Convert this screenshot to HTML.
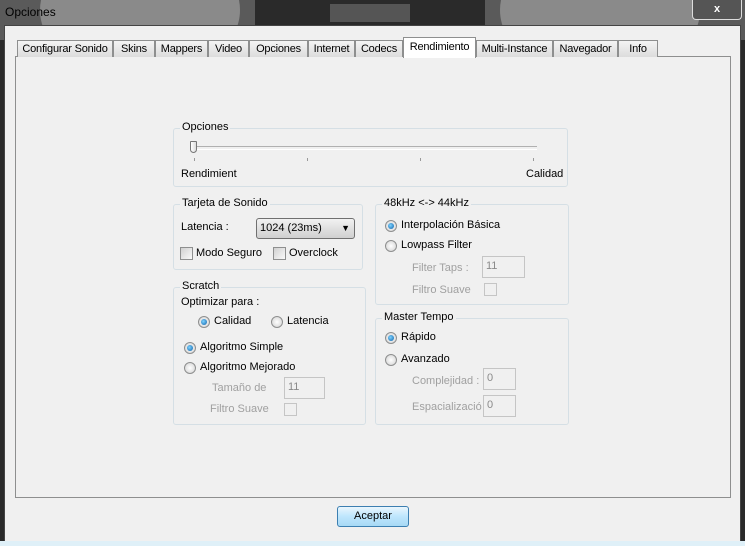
<html><head><style>
body{margin:0;width:745px;height:546px;overflow:hidden;background:#2a2a2a;font-family:"Liberation Sans",sans-serif;font-size:11px;color:#000;position:relative}
.a{position:absolute}
.tab{position:absolute;top:40px;height:17px;background:linear-gradient(#f4f4f4,#dcdcdc);border:1px solid #8e8f8f;border-bottom:none;box-sizing:border-box;text-align:center;line-height:16px;font-size:11px;letter-spacing:-0.2px}
.g{position:absolute;border:1px solid #d5dfe5;border-radius:3px;box-sizing:border-box}
.gl{position:absolute;top:-8px;left:6px;background:#f0f0f0;padding:0 2px}
.rb{position:absolute;width:12px;height:12px;border-radius:50%;border:1px solid #8e8f8f;background:radial-gradient(#fff,#d0d0d0);box-sizing:border-box}
.rb.on::after{content:"";position:absolute;left:2px;top:2px;width:6px;height:6px;border-radius:50%;background:radial-gradient(circle at 40% 40%,#7fd3ff,#0a5fa8)}
.cb{position:absolute;width:13px;height:13px;border:1px solid #8e8f8f;background:linear-gradient(135deg,#d0d0d0,#fafafa);box-sizing:border-box}
.cbd{border-color:#c5c5c5;background:#f0f0f0}
.dis{color:#a0a0a0}
.tb{position:absolute;border:1px solid #c5c5c5;background:#f0f0f0;box-sizing:border-box;color:#8a8a8a;padding-left:3px;line-height:18px}
</style></head><body>
<div class="a" style="left:0;top:0;width:745px;height:40px;background:#5a5a5a"></div>
<div class="a" style="left:40px;top:-60px;width:200px;height:140px;border-radius:50%;background:#8a8a8a"></div>
<div class="a" style="left:500px;top:-60px;width:200px;height:140px;border-radius:50%;background:#8a8a8a"></div>
<div class="a" style="left:255px;top:0;width:230px;height:26px;background:#2a2a2a"></div>
<div class="a" style="left:330px;top:4px;width:80px;height:18px;background:#555"></div>
<div class="a" style="left:5px;top:5px;color:#000;font-size:12px">Opciones</div>
<div class="a" style="left:692px;top:0;width:50px;height:20px;border:1px solid #ddd;border-top:none;border-radius:0 0 4px 4px;box-sizing:border-box;color:#fff;text-align:center;font-weight:bold;line-height:18px;background:#555">x</div>
<div class="a" style="left:4px;top:25px;width:737px;height:517px;background:#f0f0f0;border:1px solid #444;box-sizing:border-box"></div>
<div class="a" style="left:0;top:541px;width:745px;height:5px;background:#dff0f8"></div>
<div class="a" style="left:15px;top:56px;width:716px;height:442px;border:1px solid #8e8f8f;box-sizing:border-box;background:#f0f0f0"></div>
<div class="tab" style="left:17px;width:96px">Configurar Sonido</div>
<div class="tab" style="left:113px;width:42px">Skins</div>
<div class="tab" style="left:155px;width:53px">Mappers</div>
<div class="tab" style="left:208px;width:41px">Video</div>
<div class="tab" style="left:249px;width:59px">Opciones</div>
<div class="tab" style="left:308px;width:47px">Internet</div>
<div class="tab" style="left:355px;width:48px">Codecs</div>
<div class="tab" style="left:403px;top:37px;width:73px;height:21px;background:#fff;line-height:18px">Rendimiento</div>
<div class="tab" style="left:476px;width:77px">Multi-Instance</div>
<div class="tab" style="left:553px;width:65px">Navegador</div>
<div class="tab" style="left:618px;width:40px">Info</div>

<div class="g" style="left:173px;top:128px;width:395px;height:59px"><span class="gl">Opciones</span></div>
<div class="a" style="left:192px;top:146px;width:345px;height:2px;border-top:1px solid #b0b0b0;border-bottom:1px solid #fff"></div>
<div class="a" style="left:190px;top:141px;width:7px;height:12px;border:1px solid #777;border-radius:1px 1px 4px 4px;background:linear-gradient(90deg,#fff,#ddd);box-sizing:border-box"></div>
<div class="a" style="left:194px;top:158px;width:1px;height:3px;background:#999"></div>
<div class="a" style="left:307px;top:158px;width:1px;height:3px;background:#999"></div>
<div class="a" style="left:420px;top:158px;width:1px;height:3px;background:#999"></div>
<div class="a" style="left:533px;top:158px;width:1px;height:3px;background:#999"></div>
<div class="a" style="left:181px;top:168px">Rendimient</div>
<div class="a" style="left:526px;top:168px">Calidad</div>

<div class="g" style="left:173px;top:204px;width:190px;height:66px"><span class="gl">Tarjeta de Sonido</span></div>
<div class="a" style="left:181px;top:221px">Latencia :</div>
<div class="a" style="left:256px;top:218px;width:99px;height:21px;border:1px solid #707070;border-radius:3px;background:linear-gradient(#f2f2f2,#e0e0e0 50%,#d0d0d0);box-sizing:border-box;padding-left:3px;line-height:19px">1024 (23ms)<span style="position:absolute;right:4px;top:0;font-size:9px">▼</span></div>
<div class="cb" style="left:180px;top:247px"></div><div class="a" style="left:196px;top:247px">Modo Seguro</div>
<div class="cb" style="left:273px;top:247px"></div><div class="a" style="left:289px;top:247px">Overclock</div>

<div class="g" style="left:375px;top:204px;width:194px;height:101px"><span class="gl">48kHz &lt;-&gt; 44kHz</span></div>
<div class="rb on" style="left:385px;top:220px"></div><div class="a" style="left:401px;top:219px">Interpolación Básica</div>
<div class="rb" style="left:385px;top:240px"></div><div class="a" style="left:401px;top:239px">Lowpass Filter</div>
<div class="a dis" style="left:412px;top:262px">Filter Taps :</div>
<div class="tb" style="left:482px;top:256px;width:43px;height:22px">11</div>
<div class="a dis" style="left:412px;top:284px">Filtro Suave</div>
<div class="cb cbd" style="left:484px;top:283px"></div>

<div class="g" style="left:173px;top:287px;width:193px;height:138px"><span class="gl">Scratch</span></div>
<div class="a" style="left:181px;top:296px">Optimizar para :</div>
<div class="rb on" style="left:198px;top:316px"></div><div class="a" style="left:214px;top:315px">Calidad</div>
<div class="rb" style="left:271px;top:316px"></div><div class="a" style="left:287px;top:315px">Latencia</div>
<div class="rb on" style="left:184px;top:342px"></div><div class="a" style="left:200px;top:341px">Algoritmo Simple</div>
<div class="rb" style="left:184px;top:362px"></div><div class="a" style="left:200px;top:361px">Algoritmo Mejorado</div>
<div class="a dis" style="left:212px;top:382px">Tamaño de</div>
<div class="tb" style="left:284px;top:377px;width:41px;height:22px">11</div>
<div class="a dis" style="left:210px;top:403px">Filtro Suave</div>
<div class="cb cbd" style="left:284px;top:403px"></div>

<div class="g" style="left:375px;top:318px;width:194px;height:107px"><span class="gl">Master Tempo</span></div>
<div class="rb on" style="left:385px;top:332px"></div><div class="a" style="left:401px;top:331px">Rápido</div>
<div class="rb" style="left:385px;top:354px"></div><div class="a" style="left:401px;top:353px">Avanzado</div>
<div class="a dis" style="left:412px;top:375px">Complejidad :</div>
<div class="tb" style="left:483px;top:368px;width:33px;height:22px">0</div>
<div class="a dis" style="left:412px;top:401px">Espacializació</div>
<div class="tb" style="left:483px;top:395px;width:33px;height:22px">0</div>

<div class="a" style="left:337px;top:506px;width:72px;height:21px;border:1px solid #3c7fb1;border-radius:3px;background:linear-gradient(#eaf6fd,#bee6fd 50%,#a7d9f5);box-sizing:border-box;text-align:center;line-height:19px">Aceptar</div>
</body></html>
